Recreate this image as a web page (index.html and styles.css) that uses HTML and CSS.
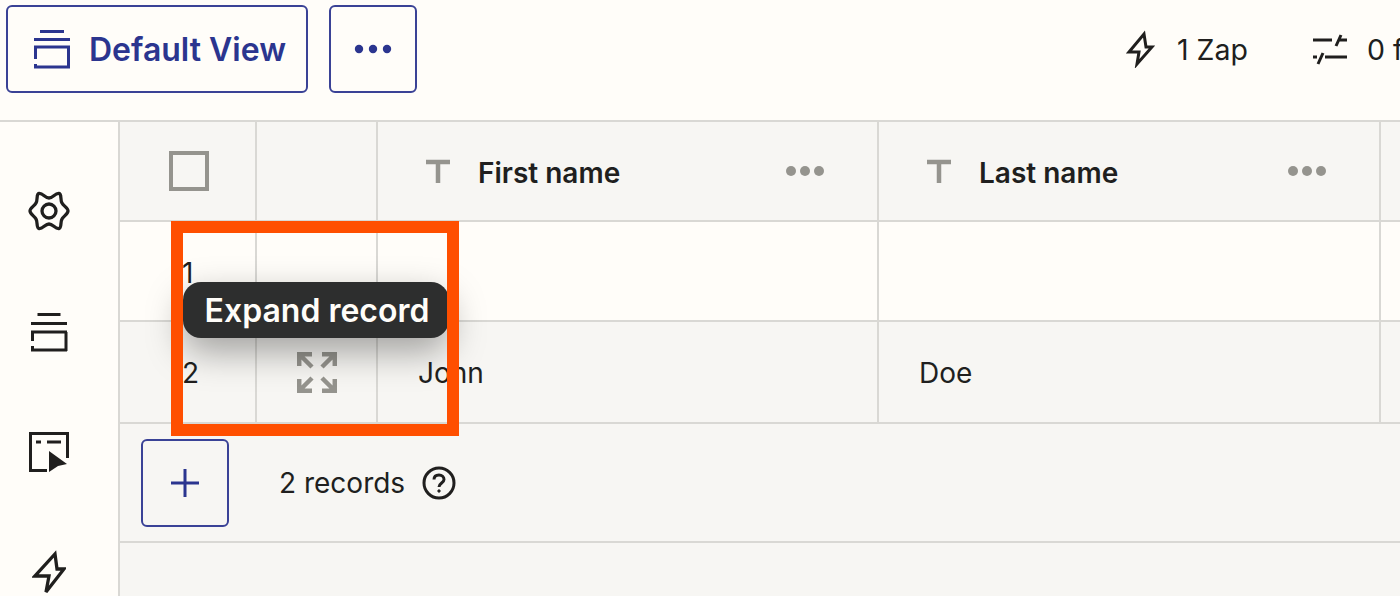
FILE: index.html
```html
<!DOCTYPE html>
<html lang="en">
<head>
    <meta charset="UTF-8">
    <meta name="viewport" content="width=device-width, initial-scale=1.0">
    <title>Table</title>
    <link rel="stylesheet" href="styles.css">
</head>
<body>
    <div class="topbar">
        <div class="view-actions">
            <button class="btn btn-view">
                <svg width="36" height="40" viewBox="0 0 36 40" fill="none" stroke="currentColor" stroke-width="3"><path d="M6 2.5H30M0 10.5H36M0 18H36M34.5 18V38M1.5 18V30M1.5 35V38M0 38H36"/></svg>
                Default View
            </button>
            <button class="btn btn-more">
                <svg width="38" height="10" viewBox="0 0 38 10" fill="currentColor"><circle cx="5" cy="5" r="4.2"/><circle cx="19" cy="5" r="4.2"/><circle cx="33" cy="5" r="4.2"/></svg>
            </button>
        </div>
        <div class="stats">
            <div class="stat stat-zap">
                <svg width="30" height="38" viewBox="0 0 30 38" fill="none" stroke="currentColor" stroke-width="3"><path d="M19 4L21 17H27L12 34L14 22H4Z"/></svg>
                <span>1 Zap</span>
            </div>
            <div class="stat stat-filter">
                <svg width="34" height="32" viewBox="0 0 34 32" fill="none" stroke="currentColor" stroke-width="3"><path d="M0 7H19M25 7H34M28 2L23 13M0 24H4M12 24H34M10 20L5 31"/></svg>
                <span>0 filters</span>
            </div>
        </div>
    </div>

    <div class="main">
        <nav class="sidebar">
            <svg width="44" height="42" viewBox="0 0 44 42" fill="none" stroke="currentColor" stroke-width="3.3"><path d="M22 8C26 8 28 3 32 3.5C35 4 33 10 35 13C36.5 16 41 18 41 21C41 24 36.5 26 35 29C33 32 35 38 32 38.5C28 39 26 34 22 34C18 34 16 39 12 38.5C9 38 11 32 9 29C7.5 26 3 24 3 21C3 18 7.5 16 9 13C11 10 9 4 12 3.5C16 3 18 8 22 8Z"/><circle cx="22" cy="21" r="7"/></svg>
            <svg width="38" height="42" viewBox="0 0 38 42" fill="none" stroke="currentColor" stroke-width="3"><path d="M7.5 4.5H30.5M1 13.5H37M1 22H37M36 22V41M2.5 22V31M2.5 36V41M1 40H37"/></svg>
            <svg width="42" height="42" viewBox="0 0 42 42" fill="none"><path d="M19 40.5H2.5V3.5H39.5V28M8 12H13M19 12H33" stroke="currentColor" stroke-width="3"/><path d="M21 21L39 34L30 36L21 42Z" fill="currentColor"/></svg>
            <svg width="34" height="46" viewBox="0 0 34 46" fill="none" stroke="currentColor" stroke-width="3.3"><path d="M23 4L25 19H32L14 42L17 26H3Z"/></svg>
        </nav>

        <div class="content">
            <div class="grid">
                <div class="row row-head">
                    <div class="cell cell-check"><span class="checkbox"></span></div>
                    <div class="cell cell-expand"></div>
                    <div class="cell cell-col cell-first">
                        <svg class="type-icon" width="24" height="24" viewBox="0 0 24 24" fill="none" stroke="currentColor" stroke-width="4.5"><path d="M0 3H24M12 3V24"/></svg>
                        <span class="col-name">First name</span>
                        <span class="dots"><i></i><i></i><i></i></span>
                    </div>
                    <div class="cell cell-col">
                        <svg class="type-icon" width="24" height="24" viewBox="0 0 24 24" fill="none" stroke="currentColor" stroke-width="4.5"><path d="M0 3H24M12 3V24"/></svg>
                        <span class="col-name">Last name</span>
                        <span class="dots"><i></i><i></i><i></i></span>
                    </div>
                    <div class="cell cell-rest"></div>
                </div>
                <div class="row row-one">
                    <div class="cell cell-check cell-num">1</div>
                    <div class="cell cell-expand"></div>
                    <div class="cell cell-col cell-first"></div>
                    <div class="cell cell-col"></div>
                    <div class="cell cell-rest"></div>
                </div>
                <div class="row row-two">
                    <div class="cell cell-check cell-num">2</div>
                    <div class="cell cell-expand">
                        <svg width="40" height="41" viewBox="0 0 40 41" fill="none" stroke="currentColor" stroke-width="4.5"><path d="M2.2 14V2.2H15M3 3L15 15M37.8 14V2.2H25M37 3L25 15M2.2 27V38.8H15M3 38L15 26M37.8 27V38.8H25M37 38L25 26"/></svg>
                    </div>
                    <div class="cell cell-col cell-first cell-text">John</div>
                    <div class="cell cell-col cell-text">Doe</div>
                    <div class="cell cell-rest"></div>
                </div>
            </div>
            <div class="grid-footer">
                <button class="btn btn-add">
                    <svg width="30" height="30" viewBox="0 0 30 30" fill="none" stroke="currentColor" stroke-width="3"><path d="M15 1V29M1 15H29"/></svg>
                </button>
                <span class="count">2 records</span>
                <svg class="help" width="34" height="34" viewBox="0 0 34 34" fill="none" stroke="currentColor" stroke-width="3"><circle cx="17" cy="17" r="15"/><path d="M12 13.5C12 10.5 14 9 17 9C20 9 22 11 22 13.5C22 17 17 17 17 21"/><circle cx="17" cy="25" r="1.2" fill="currentColor" stroke-width="1"/></svg>
            </div>
        </div>
    </div>

    <!-- tooltip and highlight box sit on top of the grid -->
    <div class="tooltip">Expand record</div>
    <div class="highlight"></div>
</body>
</html>
```

FILE: styles.css
```css
* {
    box-sizing: border-box;
}
html, body {
    height: 100%;
}
body {
    margin: 0;
    height: 596px;
    overflow: hidden;
    position: relative;
    font-family: "Inter", "Liberation Sans", sans-serif;
    background-color: #fffdf9;
    color: #201f1e;
}
.topbar {
    height: 122px;
    border-bottom: 2px solid #d9d8d4;
    display: flex;
    justify-content: space-between;
    padding: 5px 0 0 6px;
    overflow: hidden;
}
.view-actions {
    display: flex;
    gap: 21px;
    height: 88px;
}
.btn {
    background: transparent;
    border: 2px solid #3a4296;
    border-radius: 6px;
    color: #2b358f;
    font-family: inherit;
    display: flex;
    align-items: center;
    justify-content: center;
    padding: 0;
}
.btn-view {
    width: 302px;
    justify-content: flex-start;
    padding-left: 26px;
    gap: 19px;
    font-size: 32px;
    font-weight: 600;
}
.btn-more {
    width: 88px;
}
.stats {
    display: flex;
    align-items: center;
    gap: 65px;
    width: 275px;
    height: 88px;
    font-size: 28.5px;
    flex-shrink: 0;
}
.stat {
    display: flex;
    align-items: center;
    gap: 22px;
    white-space: nowrap;
}
.stat-filter {
    gap: 20px;
}
.main {
    display: flex;
    height: 474px;
}
.sidebar {
    width: 120px;
    flex-shrink: 0;
    border-right: 2px solid #d9d8d4;
    display: flex;
    flex-direction: column;
    align-items: center;
    padding: 68px 20px 0 0;
    gap: 78px;
}
.content {
    flex: 1;
    background-color: #f7f6f3;
}
.row {
    display: flex;
    border-bottom: 2px solid #d9d8d4;
}
.row-head {
    height: 100px;
}
.row-one {
    height: 100px;
    background-color: #fffdf9;
}
.row-two {
    height: 102px;
}
.cell {
    border-right: 2px solid #d9d8d4;
    display: flex;
    align-items: center;
    flex-shrink: 0;
    font-size: 28px;
}
.cell-check {
    width: 137px;
    padding-left: 49px;
}
.cell-num {
    padding-left: 62px;
    padding-top: 4px;
}
.row-two .cell-num {
    padding-top: 2px;
}
.cell-expand {
    width: 121px;
    justify-content: center;
    color: #95948e;
}
.cell-col {
    width: 502px;
    padding-left: 40px;
}
.cell-first {
    width: 501px;
}
.cell-text {
    padding-top: 2px;
}
.cell-rest {
    flex: 1;
    border-right: 0;
}
.checkbox {
    width: 40px;
    height: 40px;
    border: 4px solid #95948e;
}
.type-icon {
    margin-left: 8px;
    color: #95948e;
    flex-shrink: 0;
}
.col-name {
    margin-left: 28px;
    padding-top: 4px;
    font-weight: 600;
    flex: 1;
}
.dots {
    display: flex;
    gap: 4px;
    margin-right: 53px;
}
.dots i {
    width: 10px;
    height: 10px;
    border-radius: 50%;
    background-color: #95948e;
}
.grid-footer {
    height: 119px;
    border-bottom: 2px solid #d9d8d4;
    display: flex;
    align-items: center;
    padding-left: 21px;
    font-size: 28px;
}
.btn-add {
    width: 88px;
    height: 88px;
}
.count {
    margin-left: 50px;
}
.help {
    margin-left: 17px;
}
.tooltip {
    position: absolute;
    left: 183px;
    top: 282px;
    width: 266px;
    height: 56px;
    border-radius: 18px;
    background-color: #2d2e2e;
    color: #fffdf9;
    font-size: 32px;
    font-weight: 600;
    display: flex;
    align-items: center;
    justify-content: center;
    padding-left: 2px;
    box-shadow: 0 14px 36px rgba(0, 0, 0, 0.35);
}
.highlight {
    position: absolute;
    left: 171px;
    top: 221px;
    width: 288px;
    height: 215px;
    border: 12px solid #ff4f00;
}
```
